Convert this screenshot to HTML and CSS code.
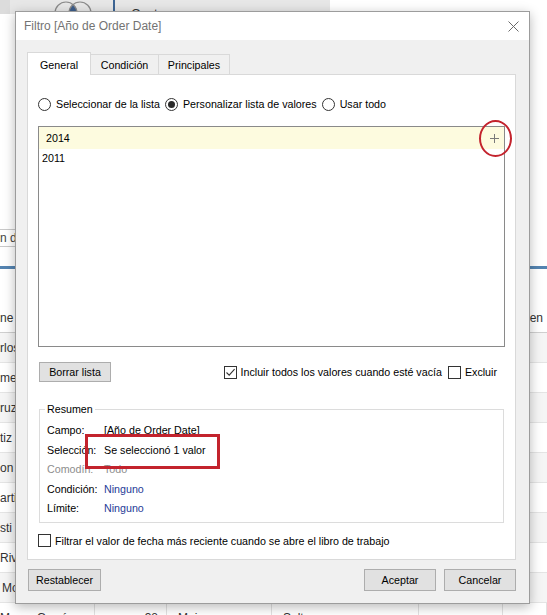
FILE: index.html
```html
<!DOCTYPE html>
<html lang="es">
<head>
<meta charset="utf-8">
<title>Filtro [Año de Order Date]</title>
<link rel="stylesheet" href="styles.css">
</head>
<body>
<div class="app">
  <div class="topbar">
    <div class="topbar-edge"></div>
    <div class="topbar-shelf">
      <svg class="venn" width="44" height="14" viewBox="0 0 44 14"><path d="M21 4.51 A11 11 0 0 1 21 21.49 A11 11 0 0 1 21 4.51 Z" fill="#3d5e8c"/><circle cx="14" cy="13" r="11" fill="none" stroke="#8a8a8a" stroke-width="1.2"/><circle cx="28" cy="13" r="11" fill="none" stroke="#8a8a8a" stroke-width="1.2"/></svg>
      <span class="vbar"></span>
      <span class="topbar-text">Cust</span>
    </div>
  </div>
  <div class="upper"></div>
  <div class="search">n datos</div>
  <div class="gap1"></div>
  <div class="blueline"></div>
  <div class="gap2"></div>
  <div class="table">
    <div class="trow head"><span class="cell">ne</span><span class="cell"></span><span class="cell"></span><span class="cell"></span><span class="cell"></span><span class="cell">Origen</span></div>
    <div class="trow band"><span class="cell">rlos</span></div>
    <div class="trow"><span class="cell">mez</span></div>
    <div class="trow band"><span class="cell">ruz</span></div>
    <div class="trow"><span class="cell">tiz</span></div>
    <div class="trow band"><span class="cell">on</span></div>
    <div class="trow"><span class="cell">arti</span></div>
    <div class="trow band"><span class="cell">sti</span></div>
    <div class="trow"><span class="cell">Riva</span></div>
    <div class="trow band"><span class="cell ind">Mo</span></div>
    <div class="trow cols"><span class="cell">Mayra Garcí</span><span class="cell num">38</span><span class="cell">Mujer</span><span class="cell">Soltero</span><span class="cell"></span><span class="cell"></span></div>
  </div>
</div>

<div class="dialog">
  <div class="titlebar">
    <span class="title">Filtro [Año de Order Date]</span>
    <svg class="close" width="11" height="11" viewBox="0 0 11 11"><path d="M0.5 0.5 L10.5 10.5 M10.5 0.5 L0.5 10.5" stroke="#6a6a6a" stroke-width="1"/></svg>
  </div>
  <div class="dbody">
    <div class="tabs">
      <div class="tab tab-general active">General</div>
      <div class="tab tab-cond">Condición</div>
      <div class="tab tab-prin">Principales</div>
    </div>
    <div class="panel">
      <div class="radios">
        <label class="radio"><span class="rbtn"></span>Seleccionar de la lista</label>
        <label class="radio"><span class="rbtn on"></span>Personalizar lista de valores</label>
        <label class="radio"><span class="rbtn"></span>Usar todo</label>
      </div>
      <div class="listbox">
        <div class="item editing">
          <span>2014</span>
          <svg class="plus" width="9" height="9" viewBox="0 0 9 9"><path d="M4.5 0 V9 M0 4.5 H9" stroke="#7a7a7a" stroke-width="1"/></svg>
          <span class="mark-circle"></span>
        </div>
        <div class="item">2011</div>
      </div>
      <div class="list-actions">
        <button class="btn btn-clear">Borrar lista</button>
        <div class="checks">
          <label class="check"><span class="cbox"><svg width="11" height="11" viewBox="0 0 11 11"><path d="M1.5 5.5 L4.2 8.2 L9.6 2.2" fill="none" stroke="#333" stroke-width="1.1"/></svg></span>Incluir todos los valores cuando esté vacía</label>
          <label class="check"><span class="cbox"></span>Excluir</label>
        </div>
      </div>
      <fieldset class="summary">
        <legend>Resumen</legend>
        <div class="srow"><span>Campo:</span><span>[Año de Order Date]</span></div>
        <div class="srow"><span>Selección:</span><span>Se seleccionó 1 valor</span></div>
        <div class="srow muted"><span>Comodín:</span><span>Todo</span></div>
        <div class="srow"><span>Condición:</span><span class="blue">Ninguno</span></div>
        <div class="srow"><span>Límite:</span><span class="blue">Ninguno</span></div>
      </fieldset>
      <label class="check latest"><span class="cbox"></span>Filtrar el valor de fecha más reciente cuando se abre el libro de trabajo</label>
    </div>
    <div class="footer">
      <button class="btn btn-foot btn-reset">Restablecer</button>
      <button class="btn btn-foot">Aceptar</button>
      <button class="btn btn-foot">Cancelar</button>
    </div>
  </div>
  <div class="mark-rect"></div>
</div>
</body>
</html>
```
FILE: styles.css
```css
* { box-sizing: border-box; }
html, body { margin: 0; padding: 0; }
body {
  width: 547px;
  height: 615px;
  overflow: hidden;
  position: relative;
  background: #ffffff;
  font-family: "Liberation Sans", Arial, sans-serif;
  color: #000;
}

/* ---------- background application ---------- */
.app { display: flex; flex-direction: column; height: 615px; }
.topbar { height: 14px; flex: none; display: flex; }
.topbar-edge { width: 10px; background: #dcdcdc; }
.topbar-shelf {
  width: 320px;
  background: #e7e7e7;
  display: flex;
  align-items: flex-start;
  padding-left: 42px;
  overflow: hidden;
}
.venn { flex: none; display: block; }
.vbar { width: 2px; height: 14px; background: #3d6594; margin-left: 17px; flex: none; }
.topbar-text { margin-left: 16px; margin-top: 6px; font-size: 13px; color: #333; }
.upper { height: 215px; flex: none; }
.search {
  height: 18px;
  width: 220px;
  flex: none;
  border: 1px solid #c9c9c9;
  border-left: none;
  font-size: 12px;
  line-height: 16px;
  color: #444;
}
.gap1 { height: 19px; flex: none; }
.blueline { height: 3px; flex: none; background: #5484b1; }
.gap2 { height: 34px; flex: none; }
.table { flex: none; }
.trow {
  display: grid;
  grid-template-columns: 95px 72px 105px 147px 84px 1fr;
  height: 30px;
  align-items: center;
  border-bottom: 1px solid #e4e4e4;
  font-size: 12px;
  color: #333;
}
.trow.head { border-bottom: 1px solid #cfcfcf; }
.trow.band { background: #f5f5f5; }
.trow .cell { white-space: nowrap; overflow: hidden; }
.trow .cell.ind { padding-left: 2px; }
.trow.head .cell:last-child { padding-left: 4px; }
.trow.cols .cell { border-right: 1px solid #e2e2e2; height: 30px; line-height: 30px; padding-left: 11px; }
.trow.cols .cell:first-child { padding-left: 0; }
.trow.cols .cell.num { text-align: right; padding-right: 8px; padding-left: 0; }

/* ---------- dialog ---------- */
.dialog {
  position: absolute;
  left: 15px;
  top: 11px;
  width: 515px;
  height: 593px;
  border: 1px solid #9c9c9c;
  background: #f0f0f0;
  box-shadow: 0 3px 11px rgba(0, 0, 0, 0.28);
  display: flex;
  flex-direction: column;
}
.titlebar {
  height: 28px;
  flex: none;
  background: #fff;
  display: flex;
  align-items: center;
  justify-content: space-between;
  padding: 0 10px 0 8px;
}
.title { font-size: 12px; color: #737373; }
.close { display: block; }

.dbody {
  flex: 1;
  display: flex;
  flex-direction: column;
  padding: 12px 13px 12px 11px;
  font-size: 10.7px;
}
.tabs {
  display: flex;
  align-items: flex-end;
  height: 22px;
  flex: none;
  position: relative;
  z-index: 1;
}
.tab {
  height: 20px;
  border: 1px solid #d9d9d9;
  border-bottom: none;
  background: #f0f0f0;
  display: flex;
  align-items: center;
  justify-content: center;
  margin-right: -1px;
}
.tab.active { height: 23px; margin-bottom: -1px; background: #fff; padding-top: 1px; }
.tab-general { width: 64px; }
.tab-cond { width: 69px; }
.tab-prin { width: 72px; }

.panel {
  height: 486px;
  flex: none;
  background: #fff;
  border: 1px solid #d9d9d9;
  display: flex;
  flex-direction: column;
  padding-top: 21px;
}
.radios {
  display: flex;
  align-items: center;
  gap: 5px;
  height: 16px;
  padding-left: 10px;
}
.radio { display: flex; align-items: center; gap: 5px; }
.rbtn {
  width: 13px;
  height: 13px;
  border: 1px solid #333;
  border-radius: 50%;
  background: #fff;
  display: flex;
  align-items: center;
  justify-content: center;
  flex: none;
}
.rbtn.on::after {
  content: "";
  width: 7px;
  height: 7px;
  border-radius: 50%;
  background: #2a2a2a;
}

.listbox {
  margin: 14px 10px 0;
  height: 221px;
  flex: none;
  border: 1px solid #8a8a8a;
  background: #fff;
}
.item {
  height: 17px;
  display: flex;
  align-items: center;
  padding-left: 3px;
}
.item.editing {
  height: 22px;
  background: #fdfbdf;
  justify-content: space-between;
  padding: 0 5px 0 7px;
  position: relative;
}
.plus { display: block; }
.mark-circle {
  position: absolute;
  left: 440px;
  top: -7px;
  width: 33px;
  height: 37px;
  border: 2.5px solid #c3232d;
  border-radius: 50%;
}

.list-actions {
  display: flex;
  align-items: center;
  justify-content: space-between;
  margin-top: 15px;
  height: 20px;
  padding: 0 18px 0 11px;
  flex: none;
}
.btn {
  font-family: "Liberation Sans", Arial, sans-serif;
  font-size: 10.7px;
  color: #000;
  background: #e1e1e1;
  border: 1px solid #adadad;
  border-radius: 0;
  padding: 0;
  display: flex;
  align-items: center;
  justify-content: center;
}
.btn-clear { width: 72px; height: 20px; }
.checks { display: flex; align-items: center; gap: 6px; }
.check { display: flex; align-items: center; gap: 4px; }
.cbox {
  width: 13px;
  height: 13px;
  border: 1px solid #333;
  background: #fff;
  flex: none;
  display: flex;
  align-items: center;
  justify-content: center;
}
.cbox svg { display: block; }

.summary {
  margin: 19px 11px 0;
  border: 1px solid #dcdcdc;
  padding: 4px 7px 3px 7px;
  min-width: 0;
  flex: none;
}
.summary legend { padding: 0 2px; margin-left: -2px; line-height: 16px; }
.srow { display: grid; grid-template-columns: 57px 1fr; line-height: 19.5px; }
.srow.muted { color: #8d8d8d; }
.blue { color: #1f3c97; }

.latest { margin-top: 10px; padding-left: 10px; height: 16px; flex: none; }

.footer {
  display: flex;
  gap: 8px;
  margin-top: 9px;
  padding-left: 1px;
  flex: none;
}
.btn-foot { width: 72px; height: 22px; }
.btn-reset { width: 73px; margin-right: auto; }

.mark-rect {
  position: absolute;
  left: 69px;
  top: 422px;
  width: 135px;
  height: 35px;
  border: 3px solid #c3232d;
}
```
